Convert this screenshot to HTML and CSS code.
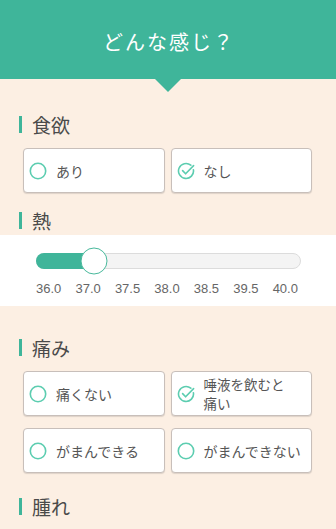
FILE: index.html
```html
<!doctype html>
<html lang="ja">
<head>
    <meta charset="UTF-8">
    <title>どんな感じ？</title>
    <link rel="stylesheet" href="styles.css">
</head>
<body>
<div class="header">
    <div class="header-title">どんな感じ？</div>
</div>

<div class="section first">
    <div class="heading">食欲</div>
    <div class="choices">
        <div class="choice">
            <svg class="mark" viewBox="0 0 20 20"><circle cx="9" cy="10" r="7.7"/></svg>
            <span>あり</span>
        </div>
        <div class="choice checked">
            <svg class="mark" viewBox="0 0 20 20"><path d="M13.8 4.2A7.5 7.5 0 1 0 16.4 8.7"/><path d="M5.6 9.6L8.6 12.8L16.6 4.6"/></svg>
            <span>なし</span>
        </div>
    </div>
</div>

<div class="section fever">
    <div class="heading">熱</div>
</div>
<div class="slider-box">
    <div class="track">
        <div class="fill" style="width: 57px"></div>
        <div class="thumb" style="left: 57px"></div>
    </div>
    <div class="scale">
        <span>36.0</span>
        <span>37.0</span>
        <span>37.5</span>
        <span>38.0</span>
        <span>38.5</span>
        <span>39.5</span>
        <span>40.0</span>
    </div>
</div>

<div class="section pain">
    <div class="heading">痛み</div>
    <div class="choices">
        <div class="choice">
            <svg class="mark" viewBox="0 0 20 20"><circle cx="9" cy="10" r="7.7"/></svg>
            <span>痛くない</span>
        </div>
        <div class="choice checked">
            <svg class="mark" viewBox="0 0 20 20"><path d="M13.8 4.2A7.5 7.5 0 1 0 16.4 8.7"/><path d="M5.6 9.6L8.6 12.8L16.6 4.6"/></svg>
            <span class="two-lines">唾液を飲むと<br>痛い</span>
        </div>
        <div class="choice">
            <svg class="mark" viewBox="0 0 20 20"><circle cx="9" cy="10" r="7.7"/></svg>
            <span>がまんできる</span>
        </div>
        <div class="choice">
            <svg class="mark" viewBox="0 0 20 20"><circle cx="9" cy="10" r="7.7"/></svg>
            <span>がまんできない</span>
        </div>
    </div>
</div>

<div class="section swelling">
    <div class="heading">腫れ</div>
</div>
</body>
</html>
```

FILE: styles.css
```css
*{
    margin: 0;
    padding: 0;
    box-sizing: border-box;
}
html,body{
    width: 100%;
    height: 100%;
}
body{
    background: #fcefe3;
    font-family: "Noto Sans CJK JP", "Noto Sans", sans-serif;
    color: #4a4a4a;
    overflow: hidden;
}
.header{
    position: relative;
    height: 79px;
    background: #3fb59a;
    display: flex;
    align-items: center;
    justify-content: center;
}
.header:after{
    content: "";
    position: absolute;
    left: 155px;
    bottom: -13px;
    border-left: 13px solid transparent;
    border-right: 13px solid transparent;
    border-top: 13px solid #3fb59a;
}
.header-title{
    color: #fff;
    font-size: 20px;
    font-weight: 400;
    letter-spacing: 2px;
    margin-left: 2px;
    margin-top: 3px;
}
.section{
    padding: 0 24px 0 19px;
}
.section.first{
    padding-top: 33px;
}
.section.fever{
    padding-top: 15px;
}
.section.pain{
    padding-top: 29px;
}
.section.swelling{
    padding-top: 21px;
}
.heading{
    display: flex;
    align-items: center;
    height: 24px;
    font-size: 19px;
    color: #4a4a4a;
}
.heading:before{
    content: "";
    width: 3px;
    height: 17px;
    background: #3fb59a;
    margin-right: 10px;
}
.choices{
    display: grid;
    grid-template-columns: 1fr 1fr;
    column-gap: 6px;
    row-gap: 12px;
    margin: 12px 0 0 4px;
}
.choice{
    height: 45px;
    background: #fff;
    border: 1px solid #c8bfba;
    border-radius: 4px;
    box-shadow: 0 1px 1px rgba(0,0,0,0.12);
    display: flex;
    align-items: center;
    padding-left: 5px;
    font-size: 14px;
    line-height: 18px;
    color: #555;
}
.choice span{
    margin-left: 7px;
}
.choice .two-lines{
    font-size: 13.5px;
    line-height: 19px;
}
.mark{
    width: 20px;
    height: 20px;
    flex-shrink: 0;
    fill: none;
    stroke: #5ccdb0;
    stroke-width: 1.6;
    stroke-linecap: round;
    stroke-linejoin: round;
}
.slider-box{
    margin-top: 3px;
    background: #fff;
    padding: 18px 35px 9px 36px;
}
.track{
    position: relative;
    height: 16px;
    background: #f4f4f4;
    border: 1px solid #dcdcdc;
    border-radius: 8px;
}
.fill{
    height: 16px;
    margin: -1px 0 0 -1px;
    background: #3fb59a;
    border-radius: 8px 0 0 8px;
}
.thumb{
    position: absolute;
    top: 50%;
    width: 27px;
    height: 27px;
    background: #fff;
    border: 1.5px solid #49b99c;
    border-radius: 50%;
    transform: translate(-50%, -50%);
}
.scale{
    display: flex;
    justify-content: space-between;
    margin: 12px 3px 0 0;
    font-family: "Liberation Sans", Arial, sans-serif;
    font-size: 13px;
    line-height: 16px;
    color: #666;
}
```
